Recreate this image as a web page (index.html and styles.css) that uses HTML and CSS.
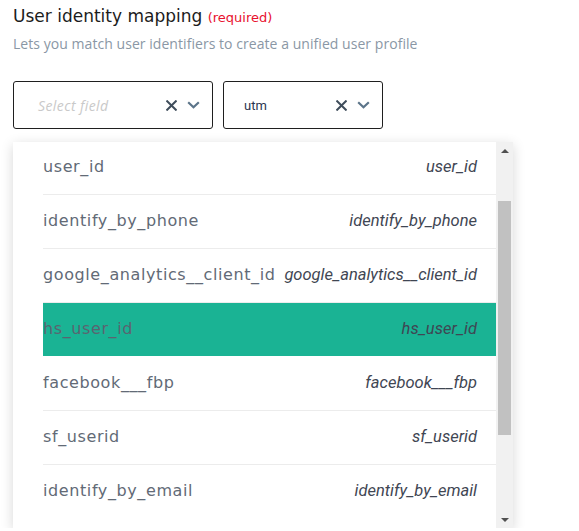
FILE: index.html
```html
<!DOCTYPE html>
<html>
<head>
<meta charset="utf-8">
<link rel="stylesheet" href="styles.css">
</head>
<body>
<div class="page">
  <div class="title">User identity mapping <span class="req">(required)</span></div>
  <div class="sub">Lets you match user identifiers to create a unified user profile</div>
  <div class="selects">
    <div class="sel sel-a">
      <span class="ph">Select field</span>
      <span class="icons">
        <svg class="ix" width="11" height="11" viewBox="0 0 11 11"><path d="M1.2 1.2L9.8 9.8M9.8 1.2L1.2 9.8" stroke="#3f4d5b" stroke-width="2" stroke-linecap="square"/></svg>
        <svg class="ich" width="13" height="8" viewBox="0 0 13 8"><path d="M1.2 1.3L6.5 6.3L11.8 1.3" fill="none" stroke="#5b7489" stroke-width="2.2"/></svg>
      </span>
    </div>
    <div class="sel sel-b">
      <span class="val">utm</span>
      <span class="icons">
        <svg class="ix" width="11" height="11" viewBox="0 0 11 11"><path d="M1.2 1.2L9.8 9.8M9.8 1.2L1.2 9.8" stroke="#3f4d5b" stroke-width="2" stroke-linecap="square"/></svg>
        <svg class="ich" width="13" height="8" viewBox="0 0 13 8"><path d="M1.2 1.3L6.5 6.3L11.8 1.3" fill="none" stroke="#5b7489" stroke-width="2.2"/></svg>
      </span>
    </div>
  </div>
  <div class="menu">
    <div class="list">
      <div class="row first"><span class="l">user_id</span><span class="r">user_id</span></div>
      <div class="row"><span class="l">identify_by_phone</span><span class="r">identify_by_phone</span></div>
      <div class="row"><span class="l">google_analytics__client_id</span><span class="r">google_analytics__client_id</span></div>
      <div class="row active"><span class="l">hs_user_id</span><span class="r">hs_user_id</span></div>
      <div class="row"><span class="l">facebook___fbp</span><span class="r">facebook___fbp</span></div>
      <div class="row"><span class="l">sf_userid</span><span class="r">sf_userid</span></div>
      <div class="row last"><span class="l">identify_by_email</span><span class="r">identify_by_email</span></div>
    </div>
    <div class="sbar">
      <div class="arr up"></div>
      <div class="track"><div class="thumb"></div></div>
      <div class="arr down"></div>
    </div>
  </div>
</div>
</body>
</html>
```

FILE: styles.css
```css
html, body {
  margin: 0;
  padding: 0;
  background: #ffffff;
}
.page {
  padding: 4px 0 0 13px;
  font-family: "Open Sans", "Noto Sans", sans-serif;
}
.title {
  font-family: "DejaVu Sans", sans-serif;
  font-size: 17px;
  line-height: 24px;
  color: #1c1c1c;
}
.req {
  font-size: 13px;
  color: #e8112d;
}
.sub {
  margin-top: 4px;
  font-size: 14px;
  line-height: 20px;
  color: #8a97a5;
  letter-spacing: 0.05px;
}
.selects {
  display: flex;
  gap: 10px;
  margin-top: 27px;
}
.sel {
  height: 46px;
  border: 1px solid #1f1f1f;
  border-radius: 3px;
  display: flex;
  align-items: center;
  justify-content: space-between;
  box-sizing: content-box;
}
.sel-a { width: 198px; }
.sel-b { width: 158px; }
.ph {
  margin-left: 24px;
  font-style: italic;
  font-size: 14px;
  letter-spacing: 0.4px;
  color: #c9c9c9;
}
.val {
  margin-left: 20px;
  font-size: 13px;
  color: #2b3550;
  font-family: "Roboto", sans-serif;
}
.icons {
  display: flex;
  align-items: center;
  gap: 10px;
  margin-right: 12px;
}
.menu {
  margin-top: 13px;
  width: 500px;
  height: 386px;
  background: #fff;
  display: flex;
  box-shadow: 0 3px 12px rgba(0,0,0,0.16);
}
.list {
  flex: 1;
  padding-left: 30px;
}
.row {
  height: 53px;
  border-bottom: 1px solid #ececec;
  display: flex;
  align-items: center;
  justify-content: space-between;
  padding-right: 19px;
}
.row.first { height: 52px; }
.row.last { border-bottom: none; }
.row.active {
  background: #1ab394;
  border-bottom-color: #fff;
}
.l {
  font-family: "DejaVu Sans", sans-serif;
  font-size: 16px;
  letter-spacing: 0.6px;
  color: #626a76;
  margin-top: -3px;
}
.r {
  font-family: "Roboto", sans-serif;
  font-style: italic;
  font-size: 16.5px;
  color: #3f4653;
  margin-top: -3px;
}
.active .l { color: #5a6470; }
.sbar {
  width: 17px;
  background: #f1f1f1;
  display: flex;
  flex-direction: column;
}
.arr {
  height: 17px;
  display: flex;
  align-items: center;
  justify-content: center;
}
.arr.up::before {
  content: "";
  border-left: 4px solid transparent;
  border-right: 4px solid transparent;
  border-bottom: 4px solid #505050;
}
.arr.down::before {
  content: "";
  border-left: 4px solid transparent;
  border-right: 4px solid transparent;
  border-top: 4px solid #505050;
}
.track {
  flex: 1;
  padding: 42px 2px 0 2px;
}
.thumb {
  height: 234px;
  background: #c1c1c1;
}
```
